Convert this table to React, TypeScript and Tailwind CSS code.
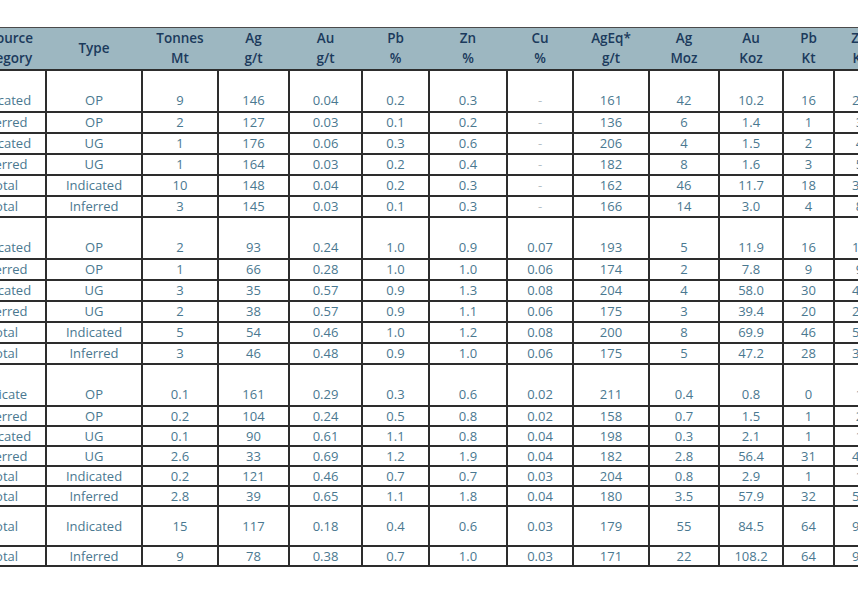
import React from 'react';

type Row = string[];

const widths = [86, 96, 76, 71, 73, 67, 78, 66, 76, 70, 64, 51, 51];

const headers: [string, string][] = [
  ['Resource', 'Category'],
  ['Type', ''],
  ['Tonnes', 'Mt'],
  ['Ag', 'g/t'],
  ['Au', 'g/t'],
  ['Pb', '%'],
  ['Zn', '%'],
  ['Cu', '%'],
  ['AgEq*', 'g/t'],
  ['Ag', 'Moz'],
  ['Au', 'Koz'],
  ['Pb', 'Kt'],
  ['Zn', 'Kt'],
];

const groups: Row[][] = [
  [
    ['Indicated', 'OP', '9', '146', '0.04', '0.2', '0.3', '-', '161', '42', '10.2', '16', '27'],
    ['Inferred', 'OP', '2', '127', '0.03', '0.1', '0.2', '-', '136', '6', '1.4', '1', '3'],
    ['Indicated', 'UG', '1', '176', '0.06', '0.3', '0.6', '-', '206', '4', '1.5', '2', '4'],
    ['Inferred', 'UG', '1', '164', '0.03', '0.2', '0.4', '-', '182', '8', '1.6', '3', '5'],
    ['Total', 'Indicated', '10', '148', '0.04', '0.2', '0.3', '-', '162', '46', '11.7', '18', '31'],
    ['Total', 'Inferred', '3', '145', '0.03', '0.1', '0.3', '-', '166', '14', '3.0', '4', '8'],
  ],
  [
    ['Indicated', 'OP', '2', '93', '0.24', '1.0', '0.9', '0.07', '193', '5', '11.9', '16', '18'],
    ['Inferred', 'OP', '1', '66', '0.28', '1.0', '1.0', '0.06', '174', '2', '7.8', '9', '9'],
    ['Indicated', 'UG', '3', '35', '0.57', '0.9', '1.3', '0.08', '204', '4', '58.0', '30', '41'],
    ['Inferred', 'UG', '2', '38', '0.57', '0.9', '1.1', '0.06', '175', '3', '39.4', '20', '22'],
    ['Total', 'Indicated', '5', '54', '0.46', '1.0', '1.2', '0.08', '200', '8', '69.9', '46', '59'],
    ['Total', 'Inferred', '3', '46', '0.48', '0.9', '1.0', '0.06', '175', '5', '47.2', '28', '31'],
  ],
  [
    ['Indicate', 'OP', '0.1', '161', '0.29', '0.3', '0.6', '0.02', '211', '0.4', '0.8', '0', '1'],
    ['Inferred', 'OP', '0.2', '104', '0.24', '0.5', '0.8', '0.02', '158', '0.7', '1.5', '1', '2'],
    ['Indicated', 'UG', '0.1', '90', '0.61', '1.1', '0.8', '0.04', '198', '0.3', '2.1', '1', '1'],
    ['Inferred', 'UG', '2.6', '33', '0.69', '1.2', '1.9', '0.04', '182', '2.8', '56.4', '31', '49'],
    ['Total', 'Indicated', '0.2', '121', '0.46', '0.7', '0.7', '0.03', '204', '0.8', '2.9', '1', '1'],
    ['Total', 'Inferred', '2.8', '39', '0.65', '1.1', '1.8', '0.04', '180', '3.5', '57.9', '32', '51'],
  ],
];

const grand: Row[] = [
  ['Total', 'Indicated', '15', '117', '0.18', '0.4', '0.6', '0.03', '179', '55', '84.5', '64', '90'],
  ['Total', 'Inferred', '9', '78', '0.38', '0.7', '1.0', '0.03', '171', '22', '108.2', '64', '90'],
];

const cellBase = 'border-2 border-[#2d2d2d] text-center p-0 leading-[16px] whitespace-nowrap';

function Cell({ value, tall }: { value: string; tall?: boolean }) {
  const align = tall ? 'align-bottom pb-[3px]' : 'align-middle';
  if (value === '-') {
    return <td className={`${cellBase} ${align} text-[#b5c0c6]`}>-</td>;
  }
  return <td className={`${cellBase} ${align}`}>{value}</td>;
}

export default function App() {
  return (
    <div className="w-[858px] h-[600px] overflow-hidden bg-white pt-[27px] font-['Open_Sans',_'Liberation_Sans',_sans-serif]">
      <table className="ml-[-41px] w-[885px] min-w-[885px] table-fixed border-collapse text-[13px] text-[#4a7890]">
        <colgroup>
          {widths.map((w, i) => (
            <col key={i} style={{ width: w }} />
          ))}
        </colgroup>
        <thead>
          <tr className="bg-[#9db7c1] h-[42px] border-t border-[#4a4a4a]">
            {headers.map(([a, b], i) => (
              <th key={i} className="p-0 text-center align-middle font-semibold text-[13.5px] leading-[20px] text-[#1b3a5c] whitespace-nowrap">
                <div>{a}</div>
                {b && <div>{b}</div>}
              </th>
            ))}
          </tr>
        </thead>
        <tbody>
          {groups.map((rows, g) =>
            rows.map((row, r) => (
              <tr key={`${g}-${r}`} className={r === 0 ? 'h-[42px]' : g === 2 ? 'h-[20px]' : 'h-[21px]'}>
                {row.map((v, c) => (
                  <Cell key={c} value={v} tall={r === 0} />
                ))}
              </tr>
            ))
          )}
          {grand.map((row, r) => (
            <tr key={`grand-${r}`} className={r === 0 ? 'h-[40px]' : 'h-[20px]'}>
              {row.map((v, c) => (
                <Cell key={c} value={v} />
              ))}
            </tr>
          ))}
        </tbody>
      </table>
    </div>
  );
}
